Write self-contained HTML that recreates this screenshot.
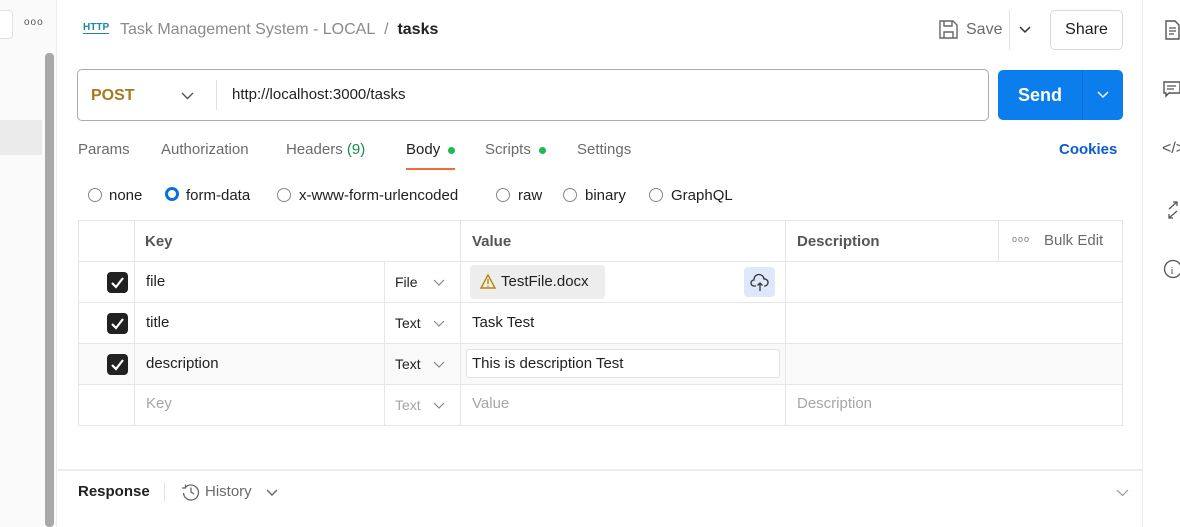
<!DOCTYPE html><html><head><style>
*{margin:0;padding:0;box-sizing:border-box}
body{width:1180px;height:527px;overflow:hidden;background:#fff;font-family:"Liberation Sans",sans-serif;font-size:15px;color:#212121;position:relative}
.a{position:absolute;white-space:nowrap}
.g{color:#6b6b6b}
.cb{position:absolute;left:107px;width:21px;height:21px;background:#212121;border-radius:4px}
.cb svg{position:absolute;left:3px;top:3px}
.rad{position:absolute;width:14px;height:14px;border:1.5px solid #888;border-radius:50%}
.chev{position:absolute}
</style></head><body>
<!-- left sidebar -->
<div class="a" style="left:0;top:0;width:57px;height:527px;background:#fafafa;border-right:1px solid #ececec"></div>
<div class="a" style="left:0;top:10px;width:13px;height:29px;border:1px solid #e2e2e2;border-left:none;border-radius:0 4px 4px 0;background:#fff"></div>
<div class="a" style="left:24px;top:17px;font-size:10px;color:#555;letter-spacing:1px">ooo</div>
<div class="a" style="left:0;top:120px;width:42px;height:35px;background:#ebebeb"></div>
<div class="a" style="left:45px;top:53px;width:9px;height:474px;background:#a8a8a8;border-radius:4px"></div>
<!-- right sidebar -->
<div class="a" style="left:1142px;top:0;width:38px;height:527px;border-left:1px solid #ececec;background:#fff"></div>
<svg class="a" style="left:1164px;top:20px" width="16" height="20"><path d="M2 1h9l4 4v14H2z" fill="none" stroke="#555" stroke-width="1.4"/><path d="M5 8h7M5 11h7M5 14h5" stroke="#555" stroke-width="1.2"/></svg>
<svg class="a" style="left:1163px;top:81px" width="17" height="18"><path d="M1 1h16v11H6l-3 3v-3H1z" fill="none" stroke="#555" stroke-width="1.4"/><path d="M4 5h9M4 8h7" stroke="#555" stroke-width="1.2"/></svg>
<div class="a" style="left:1162px;top:140px;color:#555;font-size:16px">&lt;/&gt;</div>
<svg class="a" style="left:1166px;top:201px" width="14" height="18"><path d="M3 8l8-7M7 1h4v4M11 10l-8 7M3 13v4h4" fill="none" stroke="#555" stroke-width="1.3"/></svg>
<svg class="a" style="left:1163px;top:259px" width="20" height="20"><circle cx="10" cy="10" r="8.5" fill="none" stroke="#555" stroke-width="1.3"/><text x="7.5" y="15" font-size="11" fill="#555" font-family="Liberation Serif">i</text></svg>
<!-- header -->
<div class="a" style="left:83px;top:22px;color:#1b8a9c;font-size:10px;font-weight:bold;border-bottom:1px solid #1b8a9c;line-height:11px">HTTP</div>
<div class="a" style="left:120px;top:21px;font-size:16px;color:#8a8a8a">Task Management System - LOCAL&nbsp; /&nbsp; <span style="color:#212121;font-weight:bold">tasks</span></div>
<svg class="a" style="left:939px;top:20px" width="19" height="19"><path d="M1 1h13l4 4v13H1z" fill="none" stroke="#666" stroke-width="1.4"/><path d="M5 1v5h8V1M5 18v-6h9v6" fill="none" stroke="#666" stroke-width="1.4"/></svg>
<div class="a" style="left:966px;top:21px;font-size:16px;color:#6b6b6b">Save</div>
<div class="a" style="left:1009px;top:10px;width:1px;height:40px;background:#e3e3e3"></div>
<svg class="a" style="left:1019px;top:26px" width="12" height="8"><path d="M1 1l5 5 5-5" fill="none" stroke="#333" stroke-width="1.5"/></svg>
<div class="a" style="left:1050px;top:10px;width:73px;height:40px;border:1px solid #d9d9d9;border-radius:5px;text-align:center;line-height:38px;font-size:16px">Share</div>
<!-- url bar -->
<div class="a" style="left:77px;top:69px;width:912px;height:52px;border:1px solid #ababab;border-radius:5px"></div>
<div class="a" style="left:91px;top:87px;font-weight:bold;color:#a8791b;font-size:16px">POST</div>
<svg class="a" style="left:181px;top:92px" width="13" height="8"><path d="M1 1l5.5 5.5L12 1" fill="none" stroke="#555" stroke-width="1.4"/></svg>
<div class="a" style="left:216px;top:80px;width:1px;height:30px;background:#e0e0e0"></div>
<div class="a" style="left:232px;top:86px;font-size:15px">http://localhost:3000/tasks</div>
<div class="a" style="left:998px;top:70px;width:125px;height:50px;background:#0b7ded;border-radius:5px"></div>
<div class="a" style="left:1082px;top:70px;width:1px;height:50px;background:#0a6cd0"></div>
<div class="a" style="left:1018px;top:85px;color:#fff;font-weight:bold;font-size:18px">Send</div>
<svg class="a" style="left:1097px;top:91px" width="12" height="8"><path d="M1 1l5 5 5-5" fill="none" stroke="#fff" stroke-width="1.4"/></svg>
<!-- tabs -->
<div class="a g" style="left:78px;top:141px">Params</div>
<div class="a g" style="left:161px;top:141px">Authorization</div>
<div class="a g" style="left:286px;top:141px">Headers <span style="color:#168a52">(9)</span></div>
<div class="a" style="left:406px;top:141px">Body</div>
<div class="a" style="left:448px;top:147px;width:7px;height:7px;border-radius:50%;background:#1db954"></div>
<div class="a" style="left:406px;top:168px;width:49px;height:1.5px;background:#f26b3a"></div>
<div class="a g" style="left:485px;top:141px">Scripts</div>
<div class="a" style="left:539px;top:147px;width:7px;height:7px;border-radius:50%;background:#1db954"></div>
<div class="a g" style="left:577px;top:141px">Settings</div>
<div class="a" style="left:1059px;top:141px;color:#0b5ccf;font-weight:bold">Cookies</div>
<!-- radios -->
<div class="rad" style="left:88px;top:188px"></div><div class="a" style="left:109px;top:187px">none</div>
<div class="rad" style="left:165px;top:187px;border:3.5px solid #0b6fe0"></div><div class="a" style="left:186px;top:187px">form-data</div>
<div class="rad" style="left:277px;top:188px"></div><div class="a" style="left:299px;top:187px">x-www-form-urlencoded</div>
<div class="rad" style="left:496px;top:188px"></div><div class="a" style="left:518px;top:187px">raw</div>
<div class="rad" style="left:563px;top:188px"></div><div class="a" style="left:585px;top:187px">binary</div>
<div class="rad" style="left:649px;top:188px"></div><div class="a" style="left:671px;top:187px">GraphQL</div>
<!-- table -->
<div class="a" style="left:78px;top:344px;width:1045px;height:40px;background:#f9f9f9"></div>
<div class="a" style="left:78px;top:220px;width:1045px;height:206px;border:1px solid #e6e6e6"></div>
<div class="a" style="left:78px;top:261px;width:1045px;height:1px;background:#e6e6e6"></div>
<div class="a" style="left:78px;top:302px;width:1045px;height:1px;background:#e6e6e6"></div>
<div class="a" style="left:78px;top:343px;width:1045px;height:1px;background:#e6e6e6"></div>
<div class="a" style="left:78px;top:384px;width:1045px;height:1px;background:#e6e6e6"></div>
<div class="a" style="left:134px;top:220px;width:1px;height:206px;background:#e6e6e6"></div>
<div class="a" style="left:384px;top:261px;width:1px;height:165px;background:#e6e6e6"></div>
<div class="a" style="left:460px;top:220px;width:1px;height:206px;background:#e6e6e6"></div>
<div class="a" style="left:785px;top:220px;width:1px;height:206px;background:#e6e6e6"></div>
<div class="a" style="left:998px;top:220px;width:1px;height:41px;background:#e6e6e6"></div>
<div class="a" style="left:145px;top:233px;font-weight:bold;color:#555">Key</div>
<div class="a" style="left:472px;top:233px;font-weight:bold;color:#555">Value</div>
<div class="a" style="left:797px;top:233px;font-weight:bold;color:#555">Description</div>
<div class="a" style="left:1012px;top:234px;font-size:9px;color:#777;letter-spacing:1px">ooo</div>
<div class="a g" style="left:1044px;top:232px">Bulk Edit</div>
<div class="cb" style="top:272px"><svg width="15" height="15"><path d="M2 8l4 4 7-9" fill="none" stroke="#fff" stroke-width="2.2"/></svg></div>
<div class="cb" style="top:313px"><svg width="15" height="15"><path d="M2 8l4 4 7-9" fill="none" stroke="#fff" stroke-width="2.2"/></svg></div>
<div class="cb" style="top:354px"><svg width="15" height="15"><path d="M2 8l4 4 7-9" fill="none" stroke="#fff" stroke-width="2.2"/></svg></div>
<div class="a" style="left:146px;top:273px">file</div>
<div class="a" style="left:146px;top:314px">title</div>
<div class="a" style="left:146px;top:355px">description</div>
<div class="a" style="left:146px;top:395px;color:#a6a6a6">Key</div>
<div class="a" style="left:395px;top:274px;font-size:14px">File</div>
<div class="a" style="left:395px;top:315px;font-size:14px">Text</div>
<div class="a" style="left:395px;top:356px;font-size:14px">Text</div>
<div class="a" style="left:395px;top:397px;font-size:14px;color:#a6a6a6">Text</div>
<svg class="a" style="left:433px;top:279px" width="12" height="8"><path d="M1 1l5 5 5-5" fill="none" stroke="#888" stroke-width="1.2"/></svg>
<svg class="a" style="left:433px;top:320px" width="12" height="8"><path d="M1 1l5 5 5-5" fill="none" stroke="#888" stroke-width="1.2"/></svg>
<svg class="a" style="left:433px;top:361px" width="12" height="8"><path d="M1 1l5 5 5-5" fill="none" stroke="#888" stroke-width="1.2"/></svg>
<svg class="a" style="left:433px;top:402px" width="12" height="8"><path d="M1 1l5 5 5-5" fill="none" stroke="#888" stroke-width="1.2"/></svg>
<div class="a" style="left:470px;top:265px;width:135px;height:34px;background:#ededed;border-radius:4px"></div>
<svg class="a" style="left:480px;top:274px" width="16" height="15"><path d="M8 1L1 14h14z" fill="none" stroke="#b8860b" stroke-width="1.4"/><path d="M8 5v5M8 11.5v1.2" stroke="#b8860b" stroke-width="1.4"/></svg>
<div class="a" style="left:501px;top:273px">TestFile.docx</div>
<div class="a" style="left:744px;top:267px;width:31px;height:30px;background:#dde9fb;border-radius:4px"></div>
<svg class="a" style="left:750px;top:272px" width="20" height="20"><path d="M6 14H4a3 3 0 0 1 0-6 5 5 0 0 1 10-1 3.5 3.5 0 0 1 1 7h-1" fill="none" stroke="#333" stroke-width="1.3"/><path d="M10 19v-8M7.5 13.5L10 11l2.5 2.5" fill="none" stroke="#333" stroke-width="1.3"/></svg>
<div class="a" style="left:472px;top:314px">Task Test</div>
<div class="a" style="left:466px;top:349px;width:314px;height:29px;background:#fff;border:1px solid #e3e3e3;border-radius:3px"></div>
<div class="a" style="left:472px;top:355px">This is description Test</div>
<div class="a" style="left:472px;top:395px;color:#a6a6a6">Value</div>
<div class="a" style="left:797px;top:395px;color:#a6a6a6">Description</div>
<!-- response -->
<div class="a" style="left:58px;top:469px;width:1084px;height:2px;background:#ececec"></div>
<div class="a" style="left:78px;top:483px;font-weight:bold">Response</div>
<div class="a" style="left:164px;top:482px;width:1px;height:20px;background:#e3e3e3"></div>
<svg class="a" style="left:181px;top:482px" width="20" height="20"><path d="M4 6a7.5 7.5 0 1 1-1.5 5" fill="none" stroke="#666" stroke-width="1.3"/><path d="M1 6h3.5V2.5M10 5.5V10l3 2" fill="none" stroke="#666" stroke-width="1.3"/></svg>
<div class="a g" style="left:205px;top:483px">History</div>
<svg class="a" style="left:266px;top:489px" width="12" height="8"><path d="M1 1l5 5 5-5" fill="none" stroke="#666" stroke-width="1.4"/></svg>
<svg class="a" style="left:1116px;top:489px" width="13" height="8"><path d="M1 1l5.5 5.5L12 1" fill="none" stroke="#999" stroke-width="1.2"/></svg>
</body></html>
